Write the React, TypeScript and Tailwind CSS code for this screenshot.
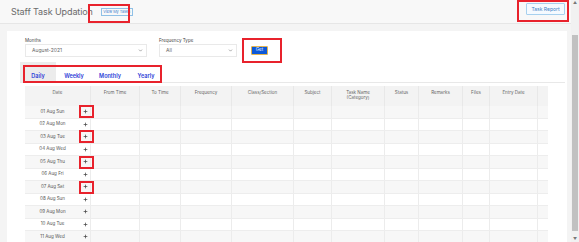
import React from "react";
import { ChevronDown, Plus } from "lucide-react";

const columns: { label: string[]; w: number }[] = [
  { label: ["Date"], w: 66 },
  { label: ["From Time"], w: 49 },
  { label: ["To Time"], w: 41 },
  { label: ["Frequency"], w: 51 },
  { label: ["Class/Section"], w: 62 },
  { label: ["Subject"], w: 38 },
  { label: ["Task Name", "(Category)"], w: 53 },
  { label: ["Status"], w: 34 },
  { label: ["Remarks"], w: 44 },
  { label: ["Files"], w: 27 },
  { label: ["Entry Date"], w: 48 },
  { label: [""], w: 10 },
];

const days = [
  "01 Aug Sun",
  "02 Aug Mon",
  "03 Aug Tue",
  "04 Aug Wed",
  "05 Aug Thu",
  "06 Aug Fri",
  "07 Aug Sat",
  "08 Aug Sun",
  "09 Aug Mon",
  "10 Aug Tue",
  "11 Aug Wed",
];

// annotation boxes drawn over the "+" of these rows
const markers = ["top-[105px]", "top-[130px]", "top-[156px]", "top-[181px]"];

const gridCols =
  "grid grid-cols-[66px_49px_41px_51px_62px_38px_53px_34px_44px_27px_48px_10px]";

const RedBox: React.FC<{ className: string }> = ({ className }) => (
  <div
    className={`pointer-events-none absolute border-2 border-[#e8222c] ${className}`}
  />
);

export default function App() {
  return (
    <div
      className="relative flex h-[242px] w-[579px] overflow-hidden bg-[#f4f4f4] text-[#555]"
      style={{ fontFamily: "Inter, 'Noto Sans', sans-serif" }}
    >
      <div className="flex min-w-0 flex-1 flex-col">
        {/* page header */}
        <div className="flex h-[24px] shrink-0 items-center justify-between border-b border-[#e6e6e6] bg-[#f8f8f8] pl-[11px] pr-[6px]">
          <div className="flex items-center">
            <h1 className="text-[9px] font-normal leading-none tracking-[-0.1px] text-[#6b6b6b]">
              Staff Task Updation
            </h1>
            <button className="ml-[8px] h-[8px] border border-[#8fc0e6] px-[1.5px] text-[3.8px] leading-none text-[#3d7fcf]">
              View My Tasks
            </button>
          </div>
          <button className="mb-[5px] h-[12px] w-[39px] rounded-[1px] border border-[#a7d0ee] bg-[#f5faff] text-[5px] leading-none text-[#3b7fc4]">
            Task Report
          </button>
        </div>

        <div className="flex-1 pl-[7px] pr-[4px] pt-[7px]">
          <div className="h-full bg-white pl-[13px] pt-[6px]">
            {/* filters */}
            <div className="flex items-start pl-[5px]">
              <div className="flex w-[134px] flex-col">
                <label className="text-[4.5px] leading-[7px] text-[#444]">Months</label>
                <div className="flex h-[13px] w-[122px] items-center justify-between border border-[#e9e9e9] pl-[6px] pr-[3px] text-[5px] text-[#666]">
                  <span>August-2021</span>
                  <ChevronDown size={5} strokeWidth={3} className="text-[#777]" />
                </div>
              </div>
              <div className="flex w-[92px] flex-col">
                <label className="text-[4.5px] leading-[7px] text-[#444]">Frequency Type</label>
                <div className="flex h-[13px] w-[78px] items-center justify-between border border-[#e9e9e9] pl-[6px] pr-[3px] text-[5px] text-[#666]">
                  <span>All</span>
                  <ChevronDown size={5} strokeWidth={3} className="text-[#777]" />
                </div>
              </div>
              <button className="mt-[9px] h-[9px] w-[17px] rounded-[1px] border border-[#e2b450] bg-[#0c58d8] text-[4.5px] leading-none text-white">
                Get
              </button>
            </div>

            {/* tabs */}
            <div className="mt-[5px] flex h-[21px] w-[545px] border-b border-[#e8e8e8]">
              {["Daily", "Weekly", "Monthly", "Yearly"].map((t, i) => (
                <div
                  key={t}
                  className={`flex h-full w-[36px] items-end justify-center pb-[3px] text-[5.5px] font-semibold leading-none text-[#2c41d8] ${
                    i === 0 ? "bg-[#ececec]" : ""
                  }`}
                >
                  {t}
                </div>
              ))}
            </div>

            {/* table */}
            <div className="ml-[5px] mt-[3px] w-[523px]">
              <div className={`${gridCols} h-[20px] bg-[#f3f3f3]`}>
                {columns.map((c, i) => (
                  <div
                    key={i}
                    className="border-r border-[#e8e8e8] pt-[4px] text-center text-[4.5px] leading-[5px] text-[#666] last:border-r-0"
                  >
                    {c.label.map((l) => (
                      <div key={l}>{l}</div>
                    ))}
                  </div>
                ))}
              </div>
              {days.map((d, r) => (
                <div
                  key={d}
                  className={`${gridCols} h-[12.5px] border-b border-[#ededed] ${
                    r % 2 === 0 ? "bg-[#f7f7f7]" : "bg-white"
                  }`}
                >
                  {columns.map((c, i) => (
                    <div
                      key={i}
                      className="flex items-center border-r border-[#ececec] last:border-r-0"
                    >
                      {i === 0 && (
                        <>
                          <span className="w-[55px] text-center text-[4.5px] leading-none text-[#555]">
                            {d}
                          </span>
                          <Plus size={5} strokeWidth={3.5} className="ml-[3px] text-[#444]" />
                        </>
                      )}
                    </div>
                  ))}
                </div>
              ))}
            </div>
          </div>
        </div>
      </div>

      {/* scrollbar */}
      <div className="flex w-[8px] shrink-0 flex-col items-center bg-[#f1f1f1]">
        <div className="mt-[1px] text-[4px] leading-none text-[#777]">▲</div>
        <div className="mt-[30px] h-[196px] w-[6px] bg-[#c1c1c1]" />
        <div className="mb-[1px] mt-auto text-[4px] leading-none text-[#777]">▼</div>
      </div>

      {/* annotation boxes */}
      <RedBox className="left-[88px] top-[4px] h-[19px] w-[42px]" />
      <RedBox className="left-[517px] top-0 h-[22px] w-[52px]" />
      <RedBox className="left-[242px] top-[38px] h-[25px] w-[40px]" />
      <RedBox className="left-[23px] top-[65px] h-[18px] w-[139px]" />
      {markers.map((t) => (
        <RedBox key={t} className={`left-[79px] h-[13px] w-[15px] ${t}`} />
      ))}
    </div>
  );
}
